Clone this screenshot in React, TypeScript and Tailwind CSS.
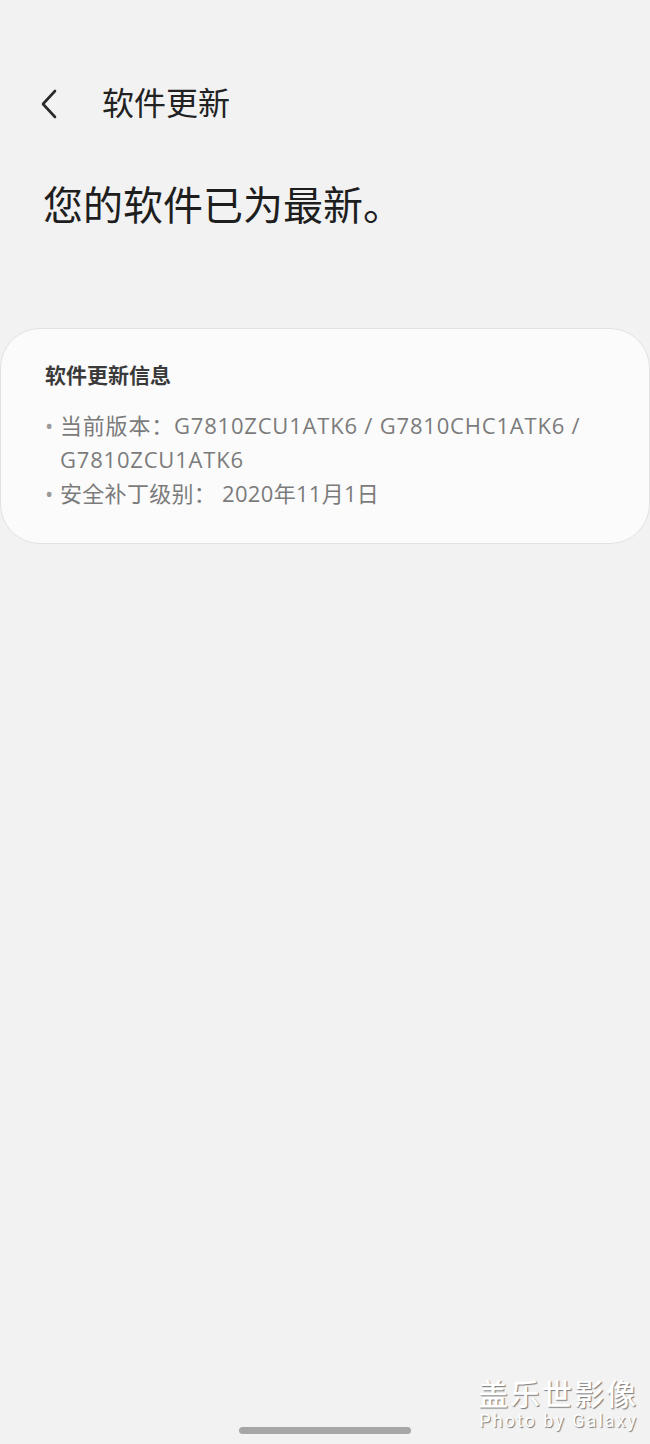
export default function App() {
  return (
    <div
      className="relative h-[1444px] w-[650px] overflow-hidden bg-[#f2f2f2]"
      style={{ fontFamily: 'Roboto, "Noto Sans CJK SC", sans-serif' }}
    >
      <div className="flex items-center pt-[84px] h-[124px]">
        <div className="flex w-[102px] items-center pl-[38px]">
          <svg width="22" height="32" viewBox="0 0 22 32" fill="none">
            <path
              d="M17 3 L5 16 L17 29"
              stroke="#2a2a2a"
              strokeWidth="2.6"
              strokeLinecap="round"
              strokeLinejoin="round"
            />
          </svg>
        </div>
        <h1 className="text-[32px] leading-none text-[#222]">软件更新</h1>
      </div>

      <p className="mt-[57px] pl-[43px] text-[40px] leading-[52px] text-[#1e1e1e]">
        您的软件已为最新。
      </p>

      <div className="mt-[95px] h-[216px] rounded-[40px] border border-[#e2e2e2] bg-[#fbfbfb] px-[44px] pt-[32px]">
        <h2 className="text-[21px] font-bold leading-[30px] text-[#3a3a3a]">
          软件更新信息
        </h2>
        <ul
          className="mt-[17px] text-[22px] leading-[34px] text-[#7b7b7b]"
          style={{ fontFamily: '"Open Sans", "Noto Sans CJK SC", sans-serif' }}
        >
          <li className="flex">
            <span className="w-[15px] shrink-0 text-[#9a9a9a]">•</span>
            <div className="tracking-[0.8px]">
              当前版本：G7810ZCU1ATK6 / G7810CHC1ATK6 / G7810ZCU1ATK6
            </div>
          </li>
          <li className="flex">
            <span className="w-[15px] shrink-0 text-[#9a9a9a]">•</span>
            <div className="tracking-[0.3px]">安全补丁级别： 2020年11月1日</div>
          </li>
        </ul>
      </div>

      <div className="absolute bottom-[13px] right-[12px] flex flex-col items-end text-white [text-shadow:1px_1px_1px_rgba(0,0,0,0.5)]">
        <span className="text-[30px] font-medium leading-[32px] tracking-[2px]">盖乐世影像</span>
        <span className="text-[18px] leading-[20px] tracking-[2px]">Photo by Galaxy</span>
      </div>

      <div className="absolute bottom-[10px] left-[239px] h-[7px] w-[172px] rounded-full bg-[#a6a6a6]" />
    </div>
  );
}
